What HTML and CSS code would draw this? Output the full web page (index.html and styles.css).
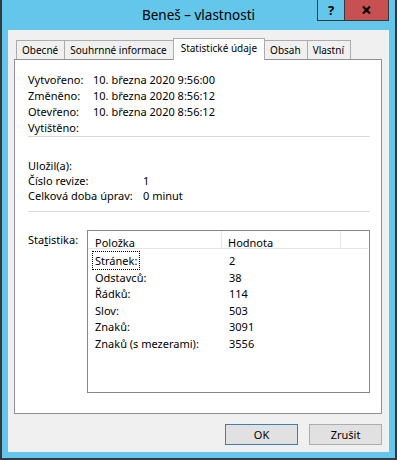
FILE: index.html
```html
<!DOCTYPE html>
<html lang="cs">
<head>
    <meta charset="UTF-8">
    <title>Beneš – vlastnosti</title>
    <link rel="stylesheet" href="styles.css">
</head>
<body>
    <div class="window">
        <div class="titlebar">
            <span class="title">Beneš – vlastnosti</span>
            <div class="caption-buttons">
                <div class="cap-btn help">?</div>
                <div class="cap-btn close">
                    <svg width="9" height="8" viewBox="0 0 9 8">
                        <path d="M1 0.5 L8 7.5 M8 0.5 L1 7.5" stroke="#000" stroke-width="2.2" fill="none"/>
                    </svg>
                </div>
            </div>
        </div>

        <div class="client">
            <div class="tabs">
                <div class="tab">Obecné</div>
                <div class="tab">Souhrnné informace</div>
                <div class="tab active">Statistické údaje</div>
                <div class="tab">Obsah</div>
                <div class="tab">Vlastní</div>
            </div>

            <div class="panel">
                <div class="info dates">
                    <span>Vytvořeno:</span><span>10. března 2020 9:56:00</span>
                    <span>Změněno:</span><span>10. března 2020 8:56:12</span>
                    <span>Otevřeno:</span><span>10. března 2020 8:56:12</span>
                    <span>Vytištěno:</span><span></span>
                </div>
                <div class="separator first"></div>

                <div class="info revisions">
                    <span>Uložil(a):</span><span></span>
                    <span>Číslo revize:</span><span>1</span>
                    <span>Celková doba úprav:</span><span>0 minut</span>
                </div>
                <div class="separator second"></div>

                <div class="stats">
                    <div class="stats-label">Sta<u>t</u>istika:</div>
                    <div class="listbox">
                        <div class="list-header">
                            <span class="col-name">Položka</span>
                            <span class="col-value">Hodnota</span>
                            <span class="col-rest"></span>
                        </div>
                        <div class="list-row">
                            <span class="col-name"><span class="focus">Stránek:</span></span>
                            <span class="col-value">2</span>
                        </div>
                        <div class="list-row">
                            <span class="col-name">Odstavců:</span>
                            <span class="col-value">38</span>
                        </div>
                        <div class="list-row">
                            <span class="col-name">Řádků:</span>
                            <span class="col-value">114</span>
                        </div>
                        <div class="list-row">
                            <span class="col-name">Slov:</span>
                            <span class="col-value">503</span>
                        </div>
                        <div class="list-row">
                            <span class="col-name">Znaků:</span>
                            <span class="col-value">3091</span>
                        </div>
                        <div class="list-row">
                            <span class="col-name">Znaků (s mezerami):</span>
                            <span class="col-value">3556</span>
                        </div>
                    </div>
                </div>
            </div>

            <div class="buttons">
                <button class="btn default">OK</button>
                <button class="btn">Zrušit</button>
            </div>
        </div>
    </div>
</body>
</html>
```

FILE: styles.css
```css
body {
    margin: 0;
    padding: 0;
    font-family: "Noto Sans", sans-serif;
    font-size: 11px;
    color: #000000;
}

.window {
    position: relative;
    width: 397px;
    height: 460px;
    box-sizing: border-box;
    background-color: #63c6ea;
    border: 2px solid #333a3f;
    border-top: none;
    padding: 0 6px 6px 6px;
}

.titlebar {
    height: 30px;
    display: flex;
    align-items: center;
    justify-content: center;
}

.title {
    font-size: 13.5px;
    color: #000000;
    margin-top: -1px;
}

.caption-buttons {
    position: absolute;
    top: 0;
    right: 6px;
    display: flex;
    border: 1px solid #333a3f;
    border-top: none;
    height: 20px;
}

.cap-btn {
    display: flex;
    align-items: center;
    justify-content: center;
}

.help {
    width: 26px;
    border-right: 1px solid #333a3f;
    font-weight: bold;
    font-size: 13px;
}

.close {
    width: 43px;
    background-color: #c75050;
}

.client {
    height: 422px;
    box-sizing: border-box;
    background-color: #f0f0f0;
    padding: 8px 7px 0 6px;
    display: flex;
    flex-direction: column;
}

.tabs {
    display: flex;
    align-items: flex-end;
    height: 21px;
    padding-left: 2px;
}

.tab {
    height: 19px;
    box-sizing: border-box;
    border: 1px solid #acacac;
    border-bottom: none;
    margin-right: -1px;
    padding: 0 6px 0 5px;
    font-size: 10px;
    line-height: 18px;
    background-color: #f0f0f0;
}

.tab.active {
    position: relative;
    z-index: 1;
    height: 22px;
    margin-bottom: -1px;
    padding: 0 7px;
    line-height: 19px;
    background-color: #ffffff;
}

.panel {
    height: 355px;
    box-sizing: border-box;
    background-color: #ffffff;
    border: 1px solid #8e9096;
    padding: 12px 11px 0 13px;
}

.info {
    display: grid;
}

.dates {
    grid-template-columns: 65px auto;
    line-height: 16px;
}

.revisions {
    grid-template-columns: 115px auto;
    line-height: 15px;
    margin-top: 21px;
}

.separator {
    height: 1px;
    background-color: #d5dadf;
}

.separator.second {
    margin-top: 8px;
}

.stats {
    display: flex;
    margin-top: 18px;
}

.stats-label {
    width: 59px;
    padding-top: 2px;
    line-height: 15px;
}

.listbox {
    width: 283px;
    height: 163px;
    box-sizing: border-box;
    border: 1px solid #828790;
}

.list-header {
    display: flex;
    height: 13px;
    padding-top: 4px;
    line-height: 15px;
    border-bottom: 1px solid #e5e5e5;
    margin-right: 1px;
    margin-bottom: 4px;
}

.list-header .col-name,
.list-header .col-value {
    border-right: 1px solid #e5e5e5;
    margin-top: -4px;
    padding-top: 4px;
}

.col-name {
    width: 134px;
    padding-left: 7px;
    box-sizing: border-box;
}

.col-value {
    width: 119px;
    padding-left: 6px;
    box-sizing: border-box;
}

.col-rest {
    flex: 1;
}

.list-row {
    display: flex;
    height: 16.6px;
    line-height: 16.6px;
}

.list-row .col-name {
    width: 135px;
}

.focus {
    margin-left: -2px;
    padding: 1px 2px;
    outline: 1px dotted #000000;
    outline-offset: 0;
}

.buttons {
    display: flex;
    justify-content: flex-end;
    gap: 11px;
    margin-top: 10px;
}

.btn {
    width: 73px;
    height: 21px;
    padding: 0;
    font-family: "Noto Sans", sans-serif;
    font-size: 11px;
    color: #000000;
    background-color: #e1e1e1;
    border: 1px solid #adadad;
}

.btn.default {
    border-color: #3c7fb1;
}
```
